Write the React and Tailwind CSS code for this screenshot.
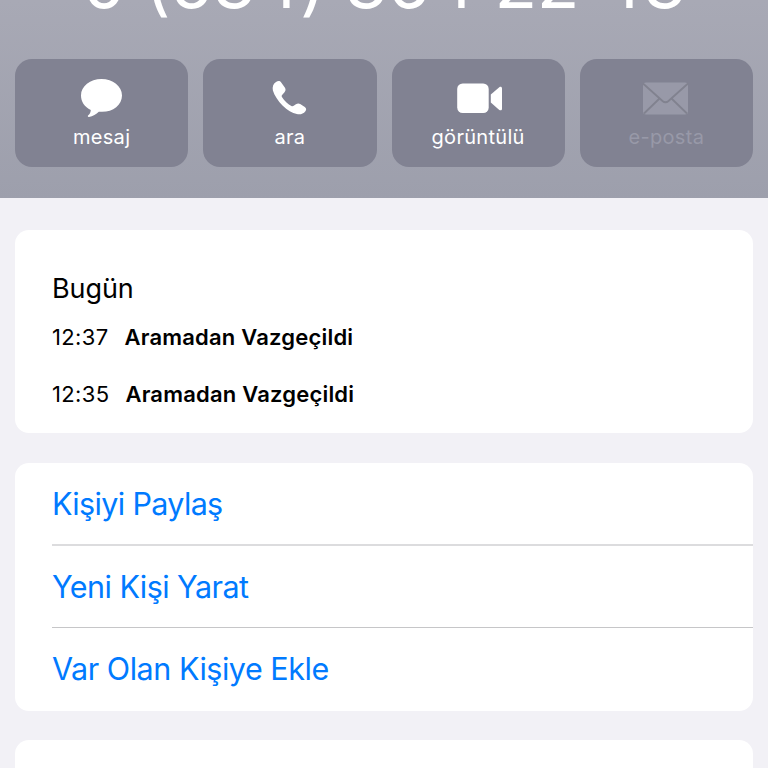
const ACTIONS = [
  { label: 'mesaj', icon: MessageIcon },
  { label: 'ara', icon: PhoneIcon },
  { label: 'görüntülü', icon: VideoIcon },
  { label: 'e-posta', icon: MailIcon, disabled: true },
];

const CALLS = [
  { time: '12:37', status: 'Aramadan Vazgeçildi' },
  { time: '12:35', status: 'Aramadan Vazgeçildi' },
];

const LINKS = [
  { label: 'Kişiyi Paylaş', style: 'h-[83px] border-b-2 border-[#dcdcde] tracking-[-0.65px]' },
  { label: 'Yeni Kişi Yarat', style: 'h-[82px] border-b border-[#c6c6c8] tracking-[-0.55px]' },
  { label: 'Var Olan Kişiye Ekle', style: 'h-[81px] tracking-[-0.47px]' },
];

function MessageIcon() {
  return (
    <svg viewBox="0 0 48 42" className="w-12 h-[42px]" fill="currentColor">
      <path d="M23.500 1C34.800 1 44 8.200 44 17.400S35.200 33.800 24 33.800c-1.200 0-2.200 0-3.200-.1-2.500 2.300-5.900 4.900-9.800 5.200-1.300.1-1.600-1-.7-1.700 1.600-1.500 2.400-3.200 2.500-5.300C6.600 29 3 23.500 3 17.400 3 8.200 12.200 1 23.500 1z" />
    </svg>
  );
}

function PhoneIcon() {
  return (
    <svg viewBox="0 0 48 42" className="w-12 h-[42px]" fill="currentColor">
      <path d="M10 4c2-1.500 3.800-1.500 5.200.4l3.600 5.100c1.100 1.700 1 3.200-.3 4.700l-2.400 2.900c-.6.8-.5 1.400 0 2.200 1.200 2 2.700 3.700 4.400 5.200 1.600 1.400 3.200 2.500 4.900 3.400.9.500 1.500.4 2.300-.1l2.200-1.500c1.500-1.100 2.900-1.200 4.300-.3l4.600 3c1.600 1.200 1.800 2.700.6 4.200-2.200 2.700-5.100 3.700-8.600 2.900-4.500-1-9.500-3.800-14.300-8.600C12.100 22.800 8.200 17.300 6.900 12.400c-.8-3.500.3-6.500 3.100-8.400z" />
    </svg>
  );
}

function VideoIcon() {
  return (
    <svg viewBox="0 0 48 42" className="w-12 h-[42px]" fill="currentColor">
      <rect x="3.200" y="5.500" width="31.500" height="29.500" rx="5.500" />
      <path d="M36.800 16.500l8.500-7.300c1.200-.9 2.700-.4 2.700 1.200v20.400c0 1.500-1.500 2-2.700 1.100L36.800 24.500z" />
    </svg>
  );
}

function MailIcon() {
  return (
    <svg viewBox="0 0 48 42" className="w-12 h-[42px]">
      <rect x="1" y="4.500" width="45" height="32" rx="3" fill="currentColor" />
      <path d="M1 5.500l19.500 17.500c1.900 1.600 4.100 1.600 6 0L46 5.500M2 35.500l15.500-15M45 35.500L29.500 20.500" fill="none" stroke="#81828f" strokeWidth="1.800" />
    </svg>
  );
}

function ActionButton({ label, icon: Icon, disabled }) {
  return (
    <button
      disabled={disabled}
      className={`h-[108px] rounded-[17px] bg-[#818292] flex flex-col items-center pt-[19px] ${disabled ? 'text-[#9899a8]' : 'text-white'}`}
    >
      <Icon />
      <span className="mt-[3px] text-[20px] leading-7 tracking-[0.3px]">{label}</span>
    </button>
  );
}

export default function App() {
  return (
    <div className="h-screen overflow-hidden bg-[#f2f1f6] text-black font-['Inter','Liberation_Sans',sans-serif]">
      {/* CONTACT HEADER */}
      <header className="h-[198px] overflow-hidden bg-linear-to-b from-[#a8a9b5] to-[#9d9fac]">
        <div className="h-[59px] flex items-start justify-center">
          <h1 className="-mt-[58px] text-[70px] leading-[82px] font-normal tracking-[-0.4px] [font-feature-settings:'calt'_0] text-white whitespace-nowrap">
            0 (534) 364 22 43
          </h1>
        </div>
        <div className="px-[15px] grid grid-cols-4 gap-[15px]">
          {ACTIONS.map((action) => (
            <ActionButton key={action.label} {...action} />
          ))}
        </div>
      </header>

      <main className="px-[15px] pt-8">
        {/* RECENT CALLS */}
        <section className="h-[203px] rounded-[14px] bg-white px-[37px] pt-[41px]">
          <h2 className="text-[27px] leading-9 tracking-[-0.1px]">Bugün</h2>
          {CALLS.map((call) => (
            <div key={call.time} className="h-[57px] pt-4 flex gap-4 text-[22px] leading-7">
              <span className="tracking-[0.35px]">{call.time}</span>
              <span className="font-semibold tracking-[0.2px]">{call.status}</span>
            </div>
          ))}
        </section>

        {/* CONTACT OPTIONS */}
        <section className="mt-[30px] h-[248px] rounded-[14px] bg-white pl-[37px] text-[30.5px] text-[#007aff]">
          {LINKS.map((link) => (
            <div key={link.label} className={`flex items-center ${link.style}`}>
              {link.label}
            </div>
          ))}
        </section>

        <section className="mt-[29px] h-20 rounded-[14px] bg-white" />
      </main>
    </div>
  );
}
